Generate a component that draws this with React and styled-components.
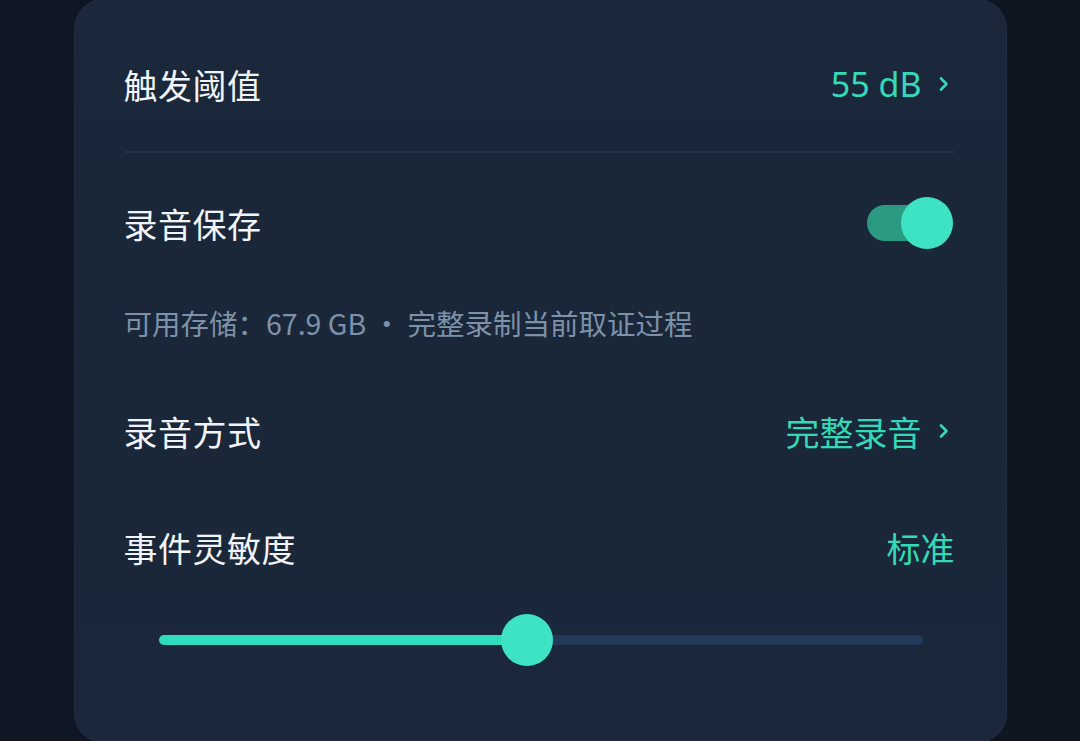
import React from "react";
import styled, { createGlobalStyle } from "styled-components";

const GlobalStyle = createGlobalStyle`
  html, body {
    margin: 0;
    padding: 0;
    background: #0d1520;
  }
  body {
    font-family: "Noto Sans", "Noto Sans CJK SC", sans-serif;
  }
`;

const accent = "#35d9b8";

function Chevron() {
  return (
    <svg width="12" height="18" viewBox="0 0 12 18" fill="none">
      <path d="M3 3.5 L8.5 9 L3 14.5" stroke={accent} strokeWidth="2.6" strokeLinecap="round" strokeLinejoin="round" />
    </svg>
  );
}

function App() {
  return (
    <>
      <GlobalStyle />
      <Page>
        <Card>
          <Row>
            <Label>触发阈值</Label>
            <Value>
              <span>55 dB</span>
              <Chevron />
            </Value>
          </Row>
          <Divider />
          <Row $top={30}>
            <Label>录音保存</Label>
            <Toggle>
              <Knob />
            </Toggle>
          </Row>
          <Hint>可用存储：67.9 GB · 完整录制当前取证过程</Hint>
          <Row $top={50}>
            <Label>录音方式</Label>
            <Value>
              <span>完整录音</span>
              <Chevron />
            </Value>
          </Row>
          <Row $top={36}>
            <Label>事件灵敏度</Label>
            <Value $plain>标准</Value>
          </Row>
          <Slider>
            <Track>
              <Fill style={{ width: "48.2%" }} />
              <Thumb style={{ left: "48.2%" }} />
            </Track>
          </Slider>
        </Card>
      </Page>
    </>
  );
}

export default App;

const Page = styled.div`
  width: 1080px;
  height: 741px;
  overflow: hidden;
  display: flex;
  justify-content: center;
  background: linear-gradient(90deg, #0e1723 0%, #0c141e 50%, #0e1621 100%);
`;

const Card = styled.div`
  width: 933px;
  box-sizing: border-box;
  height: 744px;
  margin-top: -1px;
  padding: 44px 51px 0 49px;
  background: linear-gradient(180deg, #1b283b 0%, #1a2739 50%, #1b283b 100%);
  border: 1px solid rgba(120, 150, 190, 0.06);
  border-radius: 30px;
  display: flex;
  flex-direction: column;
`;

const Row = styled.div`
  height: 80px;
  margin-top: ${(p) => p.$top || 0}px;
  display: flex;
  align-items: center;
  justify-content: space-between;
`;

const Label = styled.div`
  color: #f1f4f8;
  font-size: 34px;
  font-weight: 400;
  letter-spacing: 0.5px;
`;

const Value = styled.div`
  display: flex;
  align-items: center;
  gap: 16px;
  color: ${accent};
  font-size: 34px;
  font-weight: 400;
  margin-right: ${(p) => (p.$plain ? "0" : "5px")};
`;

const Divider = styled.div`
  height: 2px;
  margin-top: 27px;
  background: #22324a;
`;

const Toggle = styled.div`
  position: relative;
  width: 76px;
  height: 36px;
  margin-right: 12px;
  border-radius: 18px;
  background: #2a9b82;
`;

const Knob = styled.div`
  position: absolute;
  top: 50%;
  right: -10px;
  width: 52px;
  height: 52px;
  margin-top: -26px;
  border-radius: 50%;
  background: #3ee3c4;
`;

const Hint = styled.div`
  margin-top: 42px;
  line-height: 36px;
  color: #7d91a9;
  font-family: "Noto Sans CJK SC", sans-serif;
  font-size: 28.5px;
`;

const Slider = styled.div`
  margin-top: 27px;
  height: 52px;
  display: flex;
  align-items: center;
  padding: 0 32px 0 35px;
`;

const Track = styled.div`
  position: relative;
  flex: 1;
  height: 10px;
  border-radius: 5px;
  background: #22395a;
`;

const Fill = styled.div`
  height: 100%;
  border-radius: 5px;
  background: #2fdcbc;
`;

const Thumb = styled.div`
  position: absolute;
  top: 50%;
  width: 52px;
  height: 52px;
  margin: -26px 0 0 -26px;
  border-radius: 50%;
  background: #3ee3c4;
`;
